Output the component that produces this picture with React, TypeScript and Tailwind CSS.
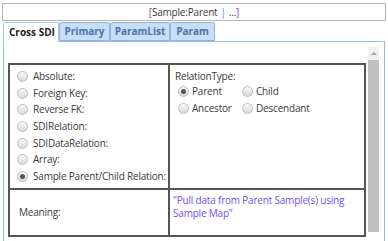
import React from "react"

const Radio = ({ checked = false }: { checked?: boolean }) => (
  <span className="relative inline-flex h-[11px] w-[11px] shrink-0 items-center justify-center rounded-full border border-[#bdbdbd] bg-gradient-to-b from-[#fafafa] to-[#d9d9d9]">
    {checked && <span className="h-[5px] w-[5px] rounded-full bg-[#555]" />}
  </span>
)

const options = [
  { label: "Absolute:" },
  { label: "Foreign Key:" },
  { label: "Reverse FK:" },
  { label: "SDIRelation:" },
  { label: "SDIDataRelation:" },
  { label: "Array:" },
  { label: "Sample Parent/Child Relation:", checked: true },
]

const tabs = [
  { name: "Cross SDI", w: "w-[56px]", active: true },
  { name: "Primary", w: "w-[51px]" },
  { name: "ParamList", w: "w-[60px]" },
  { name: "Param", w: "w-[45px]" },
]

export default function App() {
  return (
    <div className="h-[241px] w-[388px] overflow-hidden bg-white font-['Open_Sans',sans-serif] text-[10px] tracking-[-0.2px] text-[#3a3a3a]">
      <div className="mx-[2px] mt-[3px] flex h-[18px] items-center justify-center border border-[#b5b5b5] bg-white">
        <span className="text-[#8a3cb0]">[</span>
        <span>Sample:Parent</span>
        <span className="mx-[3px] text-[#5b8fd6]">|</span>
        <span>...</span>
        <span className="text-[#8a3cb0]">]</span>
      </div>

      <div className="relative z-10 ml-[3px] mt-[1px] flex h-[19px]">
        {tabs.map((t) =>
          t.active ? (
            <div
              key={t.name}
              className={`${t.w} flex h-[20px] items-center rounded-t-[2px] border border-b-0 border-[#a9c6ec] bg-white pl-[5px] font-bold tracking-normal text-[#222]`}
            >
              {t.name}
            </div>
          ) : (
            <div
              key={t.name}
              className={`${t.w} flex items-center justify-center rounded-t-[2px] border border-[#8fb4e5] bg-[#c9ddf5] font-bold tracking-normal text-[#4872ad]`}
            >
              {t.name}
            </div>
          )
        )}
      </div>

      <div className="mx-[3px] flex h-[210px] border border-b-0 border-[#99bbe8]">
        <div className="flex-1 pl-[4px] pr-[2px] pt-[21px]">
          <div className="flex flex-col border-2 border-[#555]">
            <div className="flex h-[123px]">
              <div className="w-[160px] border-r-2 border-[#555] pl-[7px] pt-[3.5px]">
                {options.map((o) => (
                  <div key={o.label} className="flex h-[16.6px] items-center gap-[5px]">
                    <Radio checked={o.checked} />
                    <span>{o.label}</span>
                  </div>
                ))}
              </div>
              <div className="flex-1 pl-[5px] pt-[4px]">
                <div className="flex h-[14px] items-center">RelationType:</div>
                <div className="grid grid-cols-[64px_auto] pl-[3px]">
                  {[
                    { l: "Parent", c: true },
                    { l: "Child" },
                    { l: "Ancestor" },
                    { l: "Descendant" },
                  ].map((r) => (
                    <div key={r.l} className="flex h-[17px] items-center gap-[3px]">
                      <Radio checked={r.c} />
                      <span>{r.l}</span>
                    </div>
                  ))}
                </div>
              </div>
            </div>
            <div className="flex h-[47px] border-t-2 border-[#555]">
              <div className="flex w-[160px] items-center border-r-2 border-[#555] pl-[9px]">Meaning:</div>
              <div className="flex-1 pl-[3px] pt-[3.5px] leading-[13px] text-[#7550ee]">
                "Pull data from Parent Sample(s) using
                <br />
                Sample Map"
              </div>
            </div>
          </div>
        </div>
        <div className="mr-[5px] flex w-[11px] flex-col pt-[5px]">
          <div className="flex h-[13px] items-center justify-center bg-[#f0f0f0]">
            <div className="h-0 w-0 border-x-[3px] border-b-[3px] border-x-transparent border-b-[#a3a3a3]" />
          </div>
          <div className="h-[172px] bg-[#c1c1c1]" />
          <div className="flex h-[19px] items-end justify-center">
            <div className="h-0 w-0 border-x-[3px] border-t-[3px] border-x-transparent border-t-[#505050]" />
          </div>
        </div>
      </div>
    </div>
  )
}
